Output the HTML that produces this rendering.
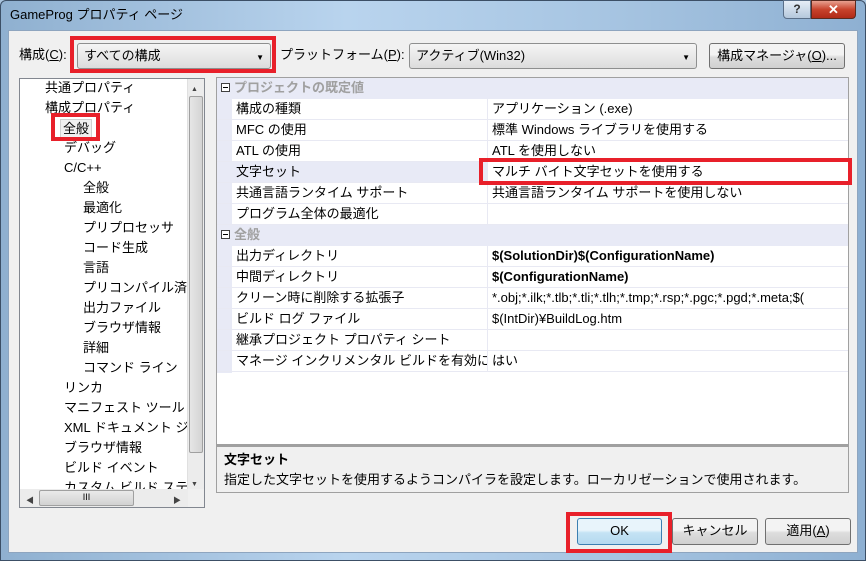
<!DOCTYPE html>
<html><head><meta charset="utf-8"><style>
*{box-sizing:border-box;margin:0;padding:0}
body{width:866px;height:561px;overflow:hidden;background:#a9c4de;font-family:"Liberation Sans","Noto Sans CJK JP",sans-serif;font-size:13px;line-height:17px;color:#000;position:relative}
.a{position:absolute;white-space:nowrap}
.frame{left:0;top:0;width:866px;height:561px;background:linear-gradient(90deg,#8fb0d0,#b9d4ee 40%,#a7c5e2 70%,#8eb0d2);border:1px solid #3c4f66;border-radius:6px 6px 0 0}
.client{left:8px;top:30px;width:850px;height:523px;background:#f0f0f0;border:1px solid #8ea5bf}
.combo{background:linear-gradient(#f5f5f5,#dcdcdc);border:1px solid #8e8f8f;border-radius:3px;height:26px;padding:3px 6px}
.btn{background:linear-gradient(#f3f3f3 45%,#dddddd 55%,#d0d0d0);border:1px solid #707070;border-radius:3px;height:27px;text-align:center;line-height:24px}
.red{border:4px solid #e8202a}
.row{position:absolute;left:0;width:631px;height:21px;border-bottom:1px solid #e8e9f3}
.row .n{position:absolute;left:15px;top:0;width:256px;height:20px;padding:1px 4px;border-right:1px solid #e8e9f3;background:#fff}
.row .v{position:absolute;left:271px;top:0;padding:1px 4px}
.cat{position:absolute;left:0;width:631px;height:21px;background:#e8eaf6;color:#a0a0a0;font-weight:bold;padding:1px 0 0 17px}
.cat i{position:absolute;left:4px;top:5px;width:9px;height:9px;border:1px solid #404040;background:#fff}
.cat i:after{content:"";position:absolute;left:1px;top:3px;width:5px;height:1px;background:#000}
.t{position:absolute;left:0;white-space:nowrap}
</style></head><body>
<div class="a frame"></div>
<div class="a" style="left:10px;top:6px;font-size:13px">GameProg プロパティ ページ</div>
<div class="a" style="left:783px;top:0;width:28px;height:19px;background:linear-gradient(#e6eef7,#b5c8dc);border:1px solid #5a6f88;border-radius:0 0 0 4px;text-align:center;color:#333;font-size:12px;font-weight:bold">?</div>
<div class="a" style="left:811px;top:0;width:45px;height:19px;background:linear-gradient(#e8a090,#c8432c 50%,#b02a18);border:1px solid #5a2a20;border-radius:0 0 4px 0;text-align:center;color:#fff;font-size:13px;font-weight:bold;line-height:17px">✕</div>
<div class="a client"></div>

<div class="a" style="left:19px;top:46px">構成(<u>C</u>):</div>
<div class="a red" style="left:70px;top:36px;width:206px;height:37px"></div>
<div class="a combo" style="left:77px;top:43px;width:194px">すべての構成<span style="position:absolute;right:6px;top:5px;font-size:8px">▼</span></div>
<div class="a" style="left:280px;top:46px">プラットフォーム(<u>P</u>):</div>
<div class="a combo" style="left:409px;top:43px;width:288px">アクティブ(Win32)<span style="position:absolute;right:6px;top:5px;font-size:8px">▼</span></div>
<div class="a btn" style="left:709px;top:43px;width:136px;height:26px">構成マネージャ(<u>O</u>)...</div>

<!-- tree -->
<div class="a" style="left:19px;top:78px;width:186px;height:430px;background:#fff;border:1px solid #828790;overflow:hidden">
 <div class="t" style="left:25px;top:0px">共通プロパティ</div>
 <div class="t" style="left:25px;top:20px">構成プロパティ</div>
 <div class="t" style="left:40px;top:40px;background:#f0f0f0;border:1px solid #d0d0d0;padding:0 2px">全般</div>
 <div class="t" style="left:44px;top:60px">デバッグ</div>
 <div class="t" style="left:44px;top:80px">C/C++</div>
 <div class="t" style="left:63px;top:100px">全般</div>
 <div class="t" style="left:63px;top:120px">最適化</div>
 <div class="t" style="left:63px;top:140px">プリプロセッサ</div>
 <div class="t" style="left:63px;top:160px">コード生成</div>
 <div class="t" style="left:63px;top:180px">言語</div>
 <div class="t" style="left:63px;top:200px">プリコンパイル済み</div>
 <div class="t" style="left:63px;top:220px">出力ファイル</div>
 <div class="t" style="left:63px;top:240px">ブラウザ情報</div>
 <div class="t" style="left:63px;top:260px">詳細</div>
 <div class="t" style="left:63px;top:280px">コマンド ライン</div>
 <div class="t" style="left:44px;top:300px">リンカ</div>
 <div class="t" style="left:44px;top:320px">マニフェスト ツール</div>
 <div class="t" style="left:44px;top:340px">XML ドキュメント ジェ</div>
 <div class="t" style="left:44px;top:360px">ブラウザ情報</div>
 <div class="t" style="left:44px;top:380px">ビルド イベント</div>
 <div class="t" style="left:44px;top:400px">カスタム ビルド ステップ</div>
 <div class="a" style="left:167px;top:0;width:17px;height:410px;background:#ececec;border-left:1px solid #e0e0e0"></div>
 <div class="a" style="left:169px;top:17px;width:14px;height:357px;background:linear-gradient(90deg,#e6e6e6,#d4d4d4);border:1px solid #a0a0a0;border-radius:2px"></div>
 <div class="a" style="left:171px;top:2px;font-size:7px;color:#444">▲</div>
 <div class="a" style="left:171px;top:397px;font-size:7px;color:#444">▼</div>
 <div class="a" style="left:0;top:410px;width:168px;height:19px;background:#ececec"></div>
 <div class="a" style="left:19px;top:411px;width:95px;height:16px;background:linear-gradient(#eaeaea,#d2d2d2);border:1px solid #a0a0a0;border-radius:2px;text-align:center;font-size:9px;line-height:13px">III</div>
 <div class="a" style="left:6px;top:413px;font-size:8px;color:#444">◀</div>
 <div class="a" style="left:153px;top:413px;font-size:8px;color:#444">▶</div>
 <div class="a" style="left:168px;top:410px;width:17px;height:19px;background:#f0f0f0"></div>
</div>
<div class="a red" style="left:51px;top:113px;width:49px;height:28px"></div>

<!-- grid -->
<div class="a" style="left:216px;top:77px;width:633px;height:368px;background:#fff;border:1px solid #a0a0a0;overflow:hidden">
 <div class="a" style="left:0;top:0;width:15px;height:295px;background:#e8eaf6"></div>
 <div class="cat" style="top:0"><i></i>プロジェクトの既定値</div>
 <div class="row" style="top:21px"><div class="n">構成の種類</div><div class="v">アプリケーション (.exe)</div></div>
 <div class="row" style="top:42px"><div class="n">MFC の使用</div><div class="v">標準 Windows ライブラリを使用する</div></div>
 <div class="row" style="top:63px"><div class="n">ATL の使用</div><div class="v">ATL を使用しない</div></div>
 <div class="row" style="top:84px"><div class="n" style="background:#e8eaf6">文字セット</div><div class="v">マルチ バイト文字セットを使用する</div></div>
 <div class="row" style="top:105px"><div class="n">共通言語ランタイム サポート</div><div class="v">共通言語ランタイム サポートを使用しない</div></div>
 <div class="row" style="top:126px"><div class="n">プログラム全体の最適化</div><div class="v"></div></div>
 <div class="cat" style="top:147px"><i></i>全般</div>
 <div class="row" style="top:168px"><div class="n">出力ディレクトリ</div><div class="v" style="font-weight:bold">$(SolutionDir)$(ConfigurationName)</div></div>
 <div class="row" style="top:189px"><div class="n">中間ディレクトリ</div><div class="v" style="font-weight:bold">$(ConfigurationName)</div></div>
 <div class="row" style="top:210px"><div class="n">クリーン時に削除する拡張子</div><div class="v">*.obj;*.ilk;*.tlb;*.tli;*.tlh;*.tmp;*.rsp;*.pgc;*.pgd;*.meta;$(</div></div>
 <div class="row" style="top:231px"><div class="n">ビルド ログ ファイル</div><div class="v">$(IntDir)¥BuildLog.htm</div></div>
 <div class="row" style="top:252px"><div class="n">継承プロジェクト プロパティ シート</div><div class="v"></div></div>
 <div class="row" style="top:273px"><div class="n" style="overflow:hidden">マネージ インクリメンタル ビルドを有効にする</div><div class="v">はい</div></div>
</div>
<div class="a red" style="left:479px;top:158px;width:373px;height:27px"></div>

<!-- description -->
<div class="a" style="left:216px;top:445px;width:633px;height:48px;border:1px solid #a0a0a0;border-top:2px solid #a0a0a0;background:#f0f0f0">
 <div class="a" style="left:7px;top:4px;font-weight:bold">文字セット</div>
 <div class="a" style="left:7px;top:24px">指定した文字セットを使用するようコンパイラを設定します。ローカリゼーションで使用されます。</div>
</div>

<div class="a red" style="left:566px;top:512px;width:106px;height:41px"></div>
<div class="a btn" style="left:577px;top:518px;width:85px;background:linear-gradient(#e8f4fb 45%,#c4e3f4 55%,#b5d9ef);border-color:#3c7fb1">OK</div>
<div class="a btn" style="left:672px;top:518px;width:86px">キャンセル</div>
<div class="a btn" style="left:765px;top:518px;width:86px">適用(<u>A</u>)</div>
</body></html>
